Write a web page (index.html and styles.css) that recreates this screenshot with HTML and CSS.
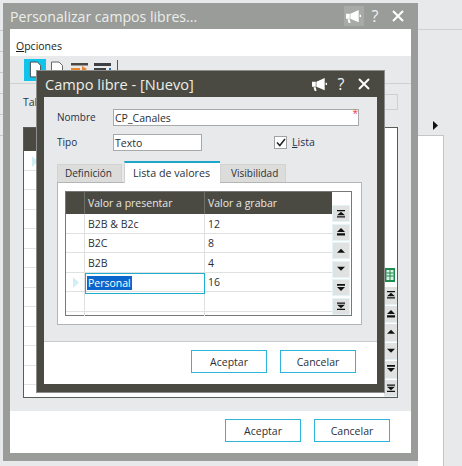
FILE: index.html
```html
<!DOCTYPE html>
<html lang="es">
<head>
<meta charset="utf-8">
<title>Personalizar campos libres</title>
<link rel="stylesheet" href="styles.css">
</head>
<body>
<svg class="defs" width="0" height="0" aria-hidden="true">
  <symbol id="mega" viewBox="0 0 17 16">
    <path d="M0 5h4v5.500H0zM4.600 5 13.500 1v13L4.600 10.500zM14.500 6h1.500v2.500h-1.500zM1.500 11h2.500l.8 4H2.800z"/>
  </symbol>
  <symbol id="close" viewBox="0 0 12 12">
    <path d="M1 1l10 10M11 1 1 11" fill="none" stroke="currentColor" stroke-width="2"/>
  </symbol>
  <symbol id="first" viewBox="0 0 9 9"><path d="M0 0h9v1.500H0zM4.500 2 9 6H0zM0 7h9v1.500H0z"/></symbol>
  <symbol id="prevp" viewBox="0 0 9 9"><path d="M4.500 0 9 4.500H0zM0 6h9v2.500H0z"/></symbol>
  <symbol id="prev" viewBox="0 0 9 9"><path d="M4.500 2 9 6.500H0z"/></symbol>
  <symbol id="next" viewBox="0 0 9 9"><path d="M0 2h9L4.500 6.500z"/></symbol>
  <symbol id="nextp" viewBox="0 0 9 9"><path d="M0 0h9v2H0zM0 3.500h9L4.500 8z"/></symbol>
  <symbol id="last" viewBox="0 0 9 9"><path d="M0 .5h9v1.500H0zM0 3h9L4.500 7zM0 7.500h9V9H0z"/></symbol>
</svg>

<div class="desk">
  <div class="desk-top"></div>
  <div class="desk-panel"></div>
  <svg class="desk-arrow" viewBox="0 0 5 9"><path d="M0 0l5 4.500L0 9z"/></svg>
  <div class="desk-left"><i></i><i></i><i></i><i></i><i></i><i></i></div>
</div>

<section class="win outer">
  <header class="titlebar outer-bar">
    <h1 class="title">Personalizar campos libres...</h1>
    <div class="controls">
      <span class="ctl ctl-mega ctl-hover"><svg class="ico-mega"><use href="#mega"/></svg></span>
      <span class="ctl ctl-q">?</span>
      <span class="ctl ctl-x"><svg class="ico-x"><use href="#close"/></svg></span>
    </div>
  </header>
  <div class="outer-body">
    <nav class="menu"><span><u>O</u>pciones</span></nav>
    <div class="toolbar">
      <span class="tool tool-on">
        <svg viewBox="0 0 14 18" width="13" height="17"><path d="M1.500 1h7.500l3.500 3.500V17h-11z" fill="#fff" stroke="#444" stroke-width="1"/></svg>
      </span>
      <span class="tool">
        <svg viewBox="0 0 14 18" width="14" height="18"><path d="M1.500 1h7.500l3.500 3.500V17h-11z" fill="#fff" stroke="#666" stroke-width="1"/><path d="M7 14h5M9.500 11.500v5" stroke="#2f9e4f" stroke-width="1.400"/></svg>
      </span>
      <span class="tool">
        <svg viewBox="0 0 18 18" width="18" height="18"><path d="M0 2h17v2.500H0z" fill="#4a4a42"/><path d="M0 7h9v2H0zM3 12h14v2H3z" fill="#e8862c"/><path d="M11 5l5 3-5 3zM7 10l-5 3 5 3z" fill="#e8862c"/></svg>
      </span>
      <span class="tool">
        <svg viewBox="0 0 18 18" width="18" height="18"><path d="M0 2h17v3H0zM0 7h12v2H0z" fill="#3d3f44"/><path d="M15 7h2v6H6v-2h9z" fill="#2a70b8"/><path d="M8 8.500v7l-4-3.500z" fill="#2a70b8"/></svg>
      </span>
      <span class="tool-sep"></span>
    </div>
    <div class="outer-content">
      <div class="tal-row">
        <span class="label">Tal</span>
        <span class="tal-input"></span>
      </div>
      <div class="back-grid">
        <div class="back-main">
          <div class="back-head"></div>
          <div class="back-rows">
            <svg class="marker back-marker" viewBox="0 0 6 11"><path d="M0 0l6 5.500L0 11z"/></svg>
            <i></i><i></i><i></i><i></i><i></i><i></i><i></i><i></i><i></i><i></i><i></i><i></i>
          </div>
        </div>
        <div class="back-side">
          <svg class="sheet" viewBox="0 0 10 14" width="10" height="14"><rect width="10" height="14" fill="#1d8a4e"/><path d="M1.500 2h7v10h-7z" fill="#dff0e4"/><path d="M5 2v10M1.500 5h7M1.500 8h7" stroke="#1d8a4e"/></svg>
          <div class="back-scroll">
            <span class="pg"><svg><use href="#first"/></svg></span>
            <span class="pg"><svg><use href="#prevp"/></svg></span>
            <span class="pg"><svg><use href="#prev"/></svg></span>
            <span class="pg"><svg><use href="#next"/></svg></span>
            <span class="pg"><svg><use href="#nextp"/></svg></span>
            <span class="pg"><svg><use href="#last"/></svg></span>
          </div>
        </div>
      </div>
    </div>
    <footer class="actions outer-actions">
      <button class="btn" type="button">Aceptar</button>
      <button class="btn" type="button">Cancelar</button>
    </footer>
  </div>
</section>

<section class="win inner">
  <header class="titlebar inner-bar">
    <h2 class="title inner-title">Campo libre - [Nuevo]</h2>
    <div class="controls inner-controls">
      <span class="ctl ctl-mega"><svg class="ico-mega"><use href="#mega"/></svg></span>
      <span class="ctl ctl-q">?</span>
      <span class="ctl ctl-x"><svg class="ico-x"><use href="#close"/></svg></span>
    </div>
  </header>
  <div class="inner-body">
    <div class="inner-content">
      <div class="form-row row-name">
        <label class="label field-label">Nombre</label>
        <div class="input input-name">CP_Canales<span class="req">*</span></div>
      </div>
      <div class="form-row row-type">
        <label class="label field-label">Tipo</label>
        <div class="input input-type">Texto</div>
        <span class="check"><svg viewBox="0 0 10 9" width="10" height="9"><path d="M1 4.500l2.800 3L9 1" fill="none" stroke="#222" stroke-width="1.500"/></svg></span>
        <span class="check-label"><u>L</u>ista</span>
      </div>
      <div class="tabs">
        <span class="tab">Definición</span>
        <span class="tab tab-on">Lista de valores</span>
        <span class="tab">Visibilidad</span>
      </div>
      <div class="tab-panel">
        <div class="grid">
          <div class="grid-main">
            <div class="grow ghead">
              <span class="c0"></span>
              <span class="c1">Valor a presentar</span>
              <span class="c2">Valor a grabar</span>
            </div>
            <div class="grow"><span class="c0"></span><span class="c1">B2B &amp; B2c</span><span class="c2">12</span></div>
            <div class="grow"><span class="c0"></span><span class="c1">B2C</span><span class="c2">8</span></div>
            <div class="grow"><span class="c0"></span><span class="c1">B2B</span><span class="c2">4</span></div>
            <div class="grow grow-edit">
              <span class="c0"><svg class="marker" viewBox="0 0 6 11"><path d="M0 0l6 5.500L0 11z"/></svg></span>
              <span class="c1 editing"><span class="sel">Personal</span></span>
              <span class="c2">16</span>
            </div>
            <div class="grow"><span class="c0"></span><span class="c1"></span><span class="c2"></span></div>
            <div class="grow grow-end"><span class="c0"></span><span class="c1"></span><span class="c2"></span></div>
          </div>
          <div class="scroller">
            <span class="pg"><svg><use href="#first"/></svg></span>
            <span class="pg"><svg><use href="#prevp"/></svg></span>
            <span class="pg"><svg><use href="#prev"/></svg></span>
            <span class="pg"><svg><use href="#next"/></svg></span>
            <span class="pg"><svg><use href="#nextp"/></svg></span>
            <span class="pg"><svg><use href="#last"/></svg></span>
          </div>
        </div>
      </div>
    </div>
    <footer class="actions inner-actions">
      <button class="btn" type="button">Aceptar</button>
      <button class="btn" type="button">Cancelar</button>
    </footer>
  </div>
</section>
</body>
</html>
```

FILE: styles.css
```css
* { box-sizing: border-box; }
html, body { margin: 0; padding: 0; }
body {
  width: 462px;
  height: 466px;
  overflow: hidden;
  position: relative;
  background: #e8e9eb;
  font-family: "Open Sans", "Noto Sans", sans-serif;
  color: #2c2f36;
  font-size: 10.500px;
}
.defs { position: absolute; }

/* desktop behind the windows */
.desk { position: absolute; inset: 0; }
.desk-top { position: absolute; left: 418px; right: 0; top: 29px; height: 1px; background: #d0d1d2; }
.desk-panel {
  position: absolute; left: 418px; top: 135px; width: 26px; bottom: 0;
  background: #fff; border: 1px solid #c4c5c6; border-bottom: 0; border-left: 0;
}
.desk-arrow { position: absolute; left: 433px; top: 121px; width: 5px; height: 9px; fill: #111; }
.desk-left { position: absolute; left: 0; top: 30px; width: 3px; display: flex; flex-direction: column; gap: 20px; }
.desk-left i { display: block; height: 1px; background: #c8c8c8; }

/* windows */
.win { position: absolute; display: flex; flex-direction: column; }
.outer { left: 3px; top: 3px; width: 415px; height: 458px; background: #9a9c99; padding: 0 7px 8px; }
.inner { left: 37px; top: 71px; width: 347px; height: 321px; background: #4a4a42; padding: 0 7px 8px; box-shadow: 0 0 0 1px #8d8e8c; }

.titlebar { display: flex; align-items: center; justify-content: space-between; flex: none; height: 26px; }
.title { margin: 0; font-weight: 400; font-size: 14.100px; color: #eceee9; white-space: nowrap; }
.inner-title { font-size: 14.600px; margin-left: 1px; }
.controls { display: flex; align-items: center; margin-right: 7px; color: #fff; }
.ctl { display: flex; align-items: center; justify-content: center; }
.ctl-mega { width: 20px; height: 20px; }
.ctl-hover { background: #a8aaa7; }
.ctl-q { width: 16px; margin-left: 3px; font-size: 16px; color: #f2f2f2; line-height: 1; }
.ctl-x { width: 12px; margin-left: 9px; }
.ico-mega { width: 16px; height: 15px; fill: #fff; }
.ico-x { width: 12px; height: 12px; display: block; }
.inner-controls { margin-right: 7px; }

.outer-body, .inner-body { flex: 1; min-height: 0; display: flex; flex-direction: column; background: #e8e9eb; }

.menu { height: 27px; flex: none; background: #fff; display: flex; align-items: flex-end; padding: 0 0 3px 6px; font-size: 10.500px; color: #1b1b1b; }
.toolbar { height: 28px; flex: none; display: flex; align-items: center; padding-left: 14px; border-bottom: 1px solid #cfd0d1; }
.tool { width: 20px; height: 22px; margin-right: 3px; display: flex; align-items: center; justify-content: center; }
.tool-on { background: #12c4ec; width: 22px; margin-right: 1px; }
.tool-sep { width: 1px; height: 20px; background: #555; margin-left: 1px; }

.outer-content { flex: 1; min-height: 0; display: flex; flex-direction: column; padding: 10px 13px 13px; }
.tal-row { display: flex; justify-content: space-between; align-items: center; height: 16px; flex: none; }
.label { font-size: 10.500px; color: #2c3540; }
.tal-input { width: 120px; height: 16px; border: 1px solid #cfd0d1; }

.back-grid { margin-top: 17px; flex: 1; min-height: 0; display: flex; border: 1px solid #5a5c58; background: #fff; }
.back-main { flex: 1; display: flex; flex-direction: column; min-width: 0; }
.back-head { height: 23px; background: #4a4a42; flex: none; }
.back-rows { position: relative; flex: 1; overflow: hidden; display: flex; flex-direction: column; }
.back-rows i { display: block; flex: none; height: 19.500px; border-bottom: 1px solid #e2e3e4; }
.back-marker { position: absolute; left: 8px; top: 5px; }
.back-side { width: 13px; flex: none; display: flex; flex-direction: column; justify-content: flex-end; align-items: center; background: #fff; }
.sheet { flex: none; margin-bottom: 5px; margin-left: -2px; }
.back-scroll { display: flex; flex-direction: column; gap: 1px; }

.marker { width: 6px; height: 11px; fill: #d2eef5; display: block; }

.pg { width: 17px; height: 17px; display: flex; align-items: center; justify-content: center; background: #e0e2e1; border: 1px solid #e4f3f5; fill: #111; }
.pg svg { width: 8px; height: 8px; display: block; }
.back-scroll .pg { width: 13px; height: 17.500px; border-width: 0 0 1px; }

/* inner dialog form */
.inner-content { flex: 1; min-height: 0; display: flex; flex-direction: column; padding: 12px 15px 0 13px; border-bottom: 1px solid #c9cacb; }
.form-row { display: flex; align-items: center; flex: none; }
.row-type { margin-top: 8px; }
.field-label { width: 56px; color: #1f2f4a; font-size: 10px; padding-bottom: 2px; }
.input { height: 17px; background: #fff; border: 1px solid #a8a9aa; border-width: 1.500px 1px 1.500px 1.500px; display: flex; align-items: center; padding-left: 1px; font-size: 10.500px; color: #2a2d33; position: relative; }
.input-name { width: 246px; }
.input-type { width: 89px; }
.req { position: absolute; right: 0; top: -2px; color: #ef3a4a; font-size: 10px; line-height: 1; }
.check { width: 13px; height: 13px; margin-left: 72px; background: #fff; border: 1px solid #a0a1a2; display: flex; align-items: center; justify-content: center; }
.check-label { margin-left: 5px; color: #24324e; padding-bottom: 1px; }

.tabs { display: flex; align-items: flex-end; height: 31px; flex: none; margin-left: 0; padding-top: 9px; }
.tab { height: 18px; padding: 0 0 1px 7px; margin-right: 2px; background: #dcdcdb; display: flex; align-items: center; color: #2c3036; border: 1px solid #d2d2d2; border-bottom: 0; font-size: 10px; }
.tab:first-child { width: 65px; }
.tab:last-child { width: 66px; margin-right: 0; padding-left: 10px; }
.tab-on { height: 22px; width: 96px; margin-right: 0; background: #fff; border: 0; border-top: 2px solid #1ea5cb; border-left: 1px solid #d0d0d0; padding-left: 8px; position: relative; z-index: 1; margin-bottom: -1px; font-size: 10.700px; }

.tab-panel { height: 143px; width: 305px; flex: none; background: #fff; border: 1px solid #b4b5b6; padding: 8px 9px 8px 7px; }
.grid { height: 125px; display: flex; border: 1px solid #77787a; background: #fff; }
.grid-main { flex: 1; min-width: 0; display: flex; flex-direction: column; }
.grow { display: flex; height: 19.500px; flex: none; border-bottom: 1px solid #dfe0e1; }
.grow-end { height: 4px; border-bottom: 0; }
.ghead { height: 22px; background: #4a4a42; color: #e8e8e2; border-bottom: 0; }
.grow > span { display: flex; align-items: center; padding-left: 2px; padding-top: 1px; border-right: 1px solid #dfe0e1; }
.ghead > span { border-right: 1px solid #6d6e68; padding-top: 0; }
.c0 { width: 19px; justify-content: center; }
.c1 { width: 120px; }
.c2 { flex: 1; border-right: 0 !important; }
.grow > .c1 { padding-left: 3px; }
.grow > .c2 { padding-left: 3px; }
.grow-edit { overflow: visible; position: relative; }
.grow > .editing { border: 1.500px solid #1eaecf; padding-left: 1px; padding-top: 0; height: 21px; }
.sel { background: #0a66cc; color: #fff; padding: 0 1px; line-height: 14px; }
.scroller { width: 19px; flex: none; display: flex; flex-direction: column; gap: 1.500px; padding-top: 13px; }
.scroller .pg { width: 18px; height: 17px; }

.actions { flex: none; height: 42px; background: #fff; display: flex; justify-content: flex-end; align-items: center; gap: 13px; }
.outer-actions { padding: 0 21px 3px 0; }
.inner-actions { padding: 0 21px 3px 0; }
.btn { width: 76px; height: 23px; padding: 0; background: #fff; border: 1.500px solid #2fb4da; border-radius: 0; font: inherit; color: #2c2f36; }
```
